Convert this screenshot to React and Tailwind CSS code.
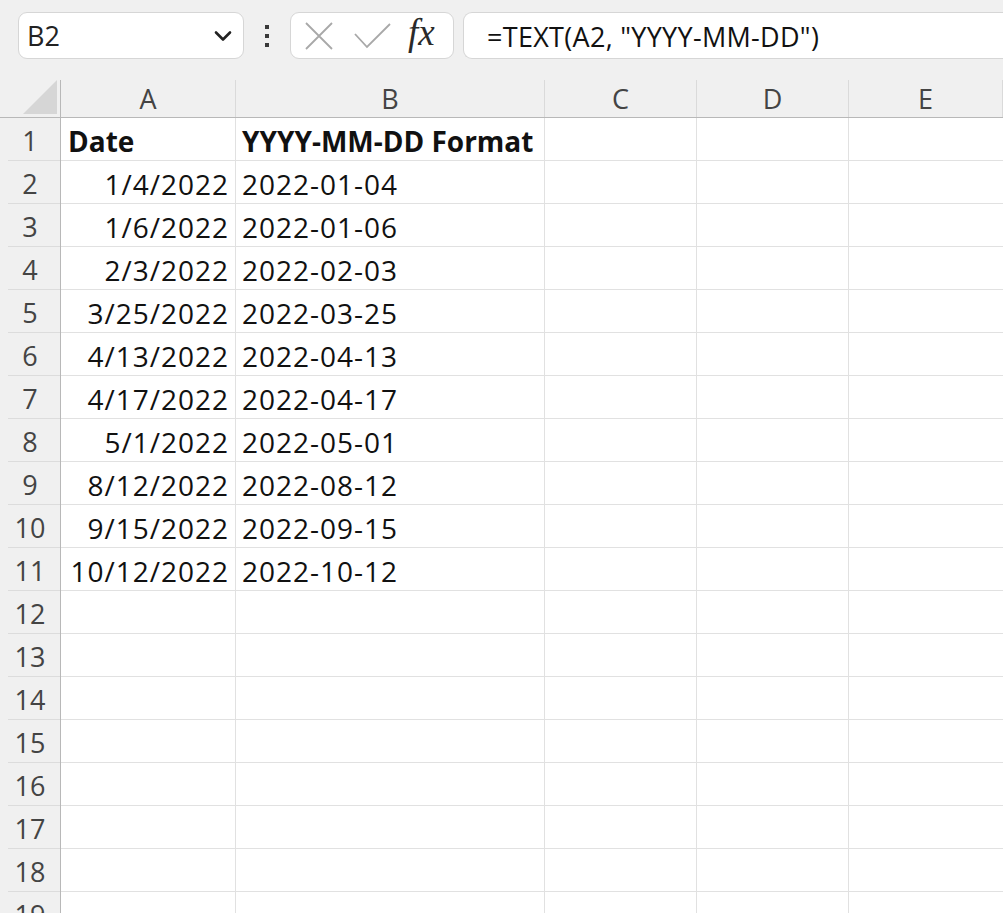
import React from 'react';

const columns = [
  { key: 'A', width: 'w-[175px]' },
  { key: 'B', width: 'w-[309px]' },
  { key: 'C', width: 'w-[152px]' },
  { key: 'D', width: 'w-[152px]' },
  { key: 'E', width: 'w-[154px]' },
];

const rows = [
  ['Date', 'YYYY-MM-DD Format'],
  ['1/4/2022', '2022-01-04'],
  ['1/6/2022', '2022-01-06'],
  ['2/3/2022', '2022-02-03'],
  ['3/25/2022', '2022-03-25'],
  ['4/13/2022', '2022-04-13'],
  ['4/17/2022', '2022-04-17'],
  ['5/1/2022', '2022-05-01'],
  ['8/12/2022', '2022-08-12'],
  ['9/15/2022', '2022-09-15'],
  ['10/12/2022', '2022-10-12'],
];

const TOTAL_ROWS = 19;

const App = () => {
  return (
    <div
      className="w-[1003px] h-[913px] overflow-hidden bg-white text-[#111]"
      style={{ fontFamily: '"Open Sans", "Noto Sans", sans-serif' }}
    >
      {/* formula bar */}
      <div className="h-[80px] bg-[#f0f0f0] flex items-start pt-[12px] pl-[18px]">
        <div className="w-[226px] h-[47px] bg-white border border-[#d6d6d6] rounded-[9px] flex items-center justify-between pl-[8px] pr-[11px]">
          <span className="text-[27px] text-[#222] leading-none">B2</span>
          <svg width="18" height="12" viewBox="0 0 18 12" fill="none">
            <path d="M2 2.5 L9 9.5 L16 2.5" stroke="#222" strokeWidth="2.6" strokeLinecap="round" strokeLinejoin="round" />
          </svg>
        </div>
        <div className="w-[46px] h-[47px] flex flex-col items-center justify-center gap-[5px]">
          <span className="block w-[4px] h-[4px] bg-[#3a3a3a]"></span>
          <span className="block w-[4px] h-[4px] bg-[#3a3a3a]"></span>
          <span className="block w-[4px] h-[4px] bg-[#3a3a3a]"></span>
        </div>
        <div className="w-[164px] h-[47px] bg-white border border-[#d6d6d6] rounded-[9px] flex items-center pl-[14px]">
          <svg width="28" height="28" viewBox="0 0 28 28" fill="none">
            <path d="M1 1 L27 27 M27 1 L1 27" stroke="#a8a8a8" strokeWidth="1.8" />
          </svg>
          <svg width="38" height="28" viewBox="0 0 38 28" fill="none" className="ml-[21px]">
            <path d="M1 12 L13 25 L36 2" stroke="#a8a8a8" strokeWidth="1.8" />
          </svg>
          <span
            className="ml-[16px] text-[37px] italic leading-none text-[#2a2a2a] -mt-[6px]"
            style={{ fontFamily: '"Liberation Serif", "DejaVu Serif", serif' }}
          >
            fx
          </span>
        </div>
        <div className="ml-[9px] flex-1 h-[47px] bg-white border border-[#d6d6d6] border-r-0 rounded-l-[9px] flex items-center pl-[23px] pt-[2px]">
          <span className="text-[27px] text-[#111] leading-none tracking-[0.3px]">=TEXT(A2, "YYYY-MM-DD")</span>
        </div>
      </div>

      {/* column headers */}
      <div className="flex h-[38px] bg-[#f0f0f0] border-b border-[#b8b8b8]">
        <div className="w-[61px] shrink-0 border-r border-[#b8b8b8] flex items-end justify-end pr-[3px] pb-[3px]">
          <svg width="34" height="34" viewBox="0 0 34 34">
            <path d="M34 0 L34 34 L0 34 Z" fill="#d6d6d6" />
          </svg>
        </div>
        {columns.map(col => (
          <div
            key={col.key}
            className={`${col.width} shrink-0 border-r border-[#dadada] flex items-center justify-center text-[27px] text-[#444] leading-none`}
          >
            {col.key}
          </div>
        ))}
      </div>

      {/* grid */}
      {Array.from({ length: TOTAL_ROWS }).map((_, i) => {
        const data = rows[i] || ['', ''];
        const isHeader = i === 0;
        return (
          <div key={i} className="flex h-[43px]">
            <div className="w-[61px] shrink-0 bg-[#f0f0f0] border-r border-[#b8b8b8] text-[27px] text-[#444] leading-none">
              <div className="h-full flex items-center justify-center border-b border-[#dcdcdc] ml-[8px] pr-[8px] pt-[3px]">
                {i + 1}
              </div>
            </div>
            <div
              className={`w-[175px] shrink-0 border-r border-b border-[#e1e1e1] flex items-center pt-[3px] text-[28px] leading-none ${
                isHeader ? 'justify-start pl-[7px] font-bold' : 'justify-end pr-[6px] tracking-[1px]'
              }`}
            >
              {data[0]}
            </div>
            <div
              className={`w-[309px] shrink-0 border-r border-b border-[#e1e1e1] flex items-center pl-[6px] pt-[3px] text-[28px] leading-none whitespace-nowrap ${
                isHeader ? 'font-bold' : 'tracking-[1px]'
              }`}
            >
              {data[1]}
            </div>
            <div className="w-[152px] shrink-0 border-r border-b border-[#e1e1e1]"></div>
            <div className="w-[152px] shrink-0 border-r border-b border-[#e1e1e1]"></div>
            <div className="w-[154px] shrink-0 border-b border-[#e1e1e1]"></div>
          </div>
        );
      })}
    </div>
  );
};

export default App;
